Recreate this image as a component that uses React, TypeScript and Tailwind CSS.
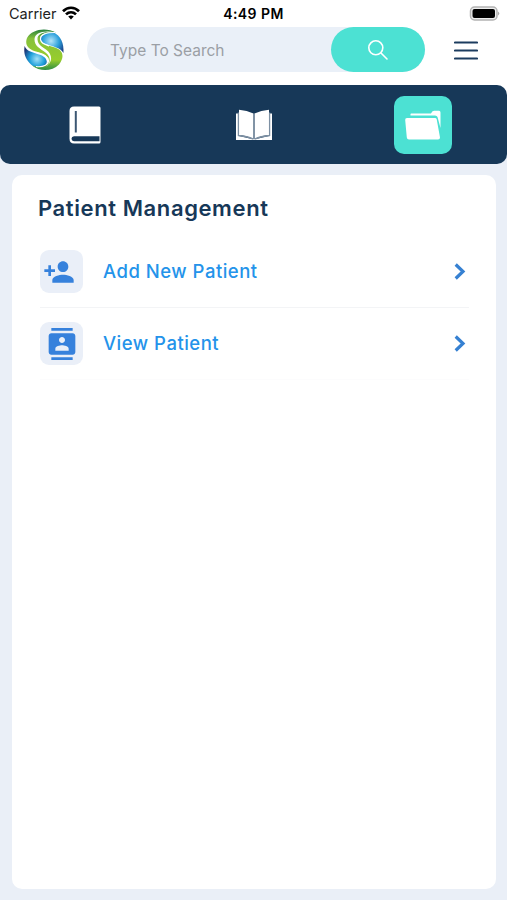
import type { ReactNode } from "react";
import { MdContacts, MdPersonAdd } from "react-icons/md";

type MenuItem = {
  label: string;
  icon: ReactNode;
};

const items: MenuItem[] = [
  {
    label: "Add New Patient",
    icon: <MdPersonAdd className="-ml-1.5 h-8 w-8" />,
  },
  {
    label: "View Patient",
    icon: <MdContacts className="h-8 w-8" />,
  },
];

function Logo() {
  return (
    <svg viewBox="0 0 40 42" className="h-[42px] w-10 shrink-0">
      <defs>
        <radialGradient id="ballTop" gradientUnits="userSpaceOnUse" cx="27" cy="12" r="15">
          <stop offset="0" stopColor="#b5e6fa" />
          <stop offset="0.55" stopColor="#2ba0dc" />
          <stop offset="1" stopColor="#1b3f86" />
        </radialGradient>
        <radialGradient id="ballBottom" gradientUnits="userSpaceOnUse" cx="13" cy="30" r="15">
          <stop offset="0" stopColor="#a5e2f8" />
          <stop offset="0.5" stopColor="#1e9fdb" />
          <stop offset="1" stopColor="#1d2f70" />
        </radialGradient>
        <linearGradient id="ribbon" x1="0" y1="0" x2="0" y2="1">
          <stop offset="0" stopColor="#27803f" />
          <stop offset="0.22" stopColor="#86c13c" />
          <stop offset="0.75" stopColor="#98cd2c" />
          <stop offset="1" stopColor="#2d8c44" />
        </linearGradient>
      </defs>
      <path d="M29 3C37 7 40 14 39.500 24C36 18 29 18 22 15C14 12 14 4 29 3Z" fill="url(#ballTop)" />
      <path d="M.6 17C3 23 9 23 15 25.500C24 28 26 36 17 38.500C13 39 9 37.500 7 35.500C1 30 -.5 24 .6 17Z" fill="url(#ballBottom)" />
      <path d="M32 3.500C22 -2 8 0 3 9C0 17 6 21 12 22.500C20 24.500 25 27 24 33C22 38 15 39 8 36.500C16 43 28 42.500 35 35.500C41 28 39 21 31 18.500C24 16.500 17 15 16 10C16 5 22 2.500 32 3.500Z" fill="url(#ribbon)" />
      <path d="M31 3.300C20 2 13 4.500 13.500 10.500C14 16 18 17.500 22 20.500C29 25.500 29 34 21 38.200C27 35 27.500 28 21.500 23.500C16 19.500 10.500 17 10.500 10.500C10.500 4 19 1 31 3.300Z" fill="white" />
      <path d="M31 3.500C23 3.500 16 5 16.500 10.500C17 14 20 15 25 17M12 23.500C20 25 24 27.500 24.500 31.500C24.500 36 19 38.500 12 37.500" fill="none" stroke="white" strokeWidth="1.200" />
    </svg>
  );
}

function StatusBar() {
  return (
    <div className="flex h-[27px] items-center justify-between pr-[7px] pl-[9px]">
      <div className="flex w-[100px] items-center gap-[5px] text-[14.5px] text-[#222]">
        <span>Carrier</span>
        <svg viewBox="0 0 18 14" className="mb-0.5 h-[14px] w-[18px]" fill="none" stroke="black" strokeWidth="2.7">
          <path d="M1 5.2C5.6 .6 12.4 .6 17 5.2" />
          <path d="M4 8.4C6.9 5.6 11.1 5.6 14 8.4" />
          <path d="M9 13.5L6.2 10.6Q9 8.5 11.8 10.6Z" fill="black" stroke="none" />
        </svg>
      </div>
      <span className="-ml-0.5 text-[14px] font-semibold tracking-[0.45px] text-black">4:49 PM</span>
      <div className="flex w-[100px] justify-end">
        <svg viewBox="0 0 31 15" className="h-[15px] w-[31px]">
          <rect x="1.5" y="1" width="26.500" height="13" rx="4" fill="#eee" stroke="#b3b3b3" strokeWidth="1.5" />
          <rect x="3.500" y="3" width="22.500" height="9" rx="2" fill="black" />
          <path d="M29 5.500Q31.500 7.500 29 9.500Z" fill="#aaa" />
        </svg>
      </div>
    </div>
  );
}

function Header() {
  return (
    <div className="flex h-[45px] items-center pl-6">
      <Logo />
      <div className="ml-[23px] flex h-[45px] w-[338px] items-center justify-between rounded-full bg-[#eaf0f8] pl-[23px]">
        <span className="pt-0.5 text-[15.5px] text-[#9b9fa5]">Type To Search</span>
        <div className="flex h-[45px] w-[94px] items-center justify-center rounded-full bg-[#4ce1d3]">
          <svg viewBox="0 0 22 22" className="h-[22px] w-[22px]" fill="none" stroke="white" strokeWidth="1.6" strokeLinecap="round">
            <circle cx="8.8" cy="8.8" r="7" />
            <path d="M14 14L20 20" />
          </svg>
        </div>
      </div>
      <svg viewBox="0 0 24 20" className="mt-0.5 ml-[29px] h-5 w-6" stroke="#1c3c5f" strokeWidth="2.1" strokeLinecap="round">
        <path d="M1 1.500H23M1 9.500H23M1 17.500H23" />
      </svg>
    </div>
  );
}

function NavBar() {
  return (
    <div className="grid h-[79px] grid-cols-3 place-items-center rounded-[10px] bg-[#173858]">
      <svg viewBox="0 0 32 38" className="h-[38px] w-8">
        <path d="M5 .5H30Q31.500 .5 31.500 2V36Q31.500 37.500 30 37.500H5Q.5 37.500 .5 32.500V5Q.5 .5 5 .5Z" fill="white" />
        <path d="M6.800 5V26.500" stroke="#3c5773" strokeWidth="2" />
        <path d="M5 30.200H30.500V35.300H5Q2.500 35 2.500 32.700Q2.500 30.500 5 30.200Z" fill="#173858" />
      </svg>
      <svg viewBox="0 0 38 32" className="h-8 w-[38px]">
        <path d="M1 4.500H4V27L17 30H21L34 27V4.500H37V31H1Z" fill="white" />
        <path d="M4 .8Q12 1.500 18.500 4.500V30Q12 26.500 4 26Z" fill="white" />
        <path d="M34 .8Q26 1.500 19.500 4.500V30Q26 26.500 34 26Z" fill="white" />
        <path d="M3.400 3.500V26.500Q12 27 18.500 30.200M34.600 3.500V26.500Q26 27 19.500 30.200M19 5V30" stroke="#7d90a3" strokeWidth="1.300" fill="none" />
      </svg>
      <div className="flex h-[58px] w-[58px] items-center justify-center rounded-[10px] bg-[#4ce1d3]">
        <svg viewBox="0 0 38 30" className="h-[30px] w-[38px]" fill="white">
          <path d="M7 3.500H27Q28 1 30 .7H35Q36.500 .7 36.500 2.500V18L33.500 7Q33 5.500 31 5.500H6.500V4Z" />
          <path d="M3 8H31Q32.300 8 32.700 9.300L36 27.500Q36 29.500 34 29.500H5Q3 29.500 2.800 27.500L1.200 10Q1 8 3 8Z" />
        </svg>
      </div>
    </div>
  );
}

function MenuRow({ item }: { item: MenuItem }) {
  return (
    <div className="flex h-[72px] items-center border-b border-[#f3f4f6] pr-[3px] last:border-[#fcfcfd]">
      <div className="flex h-[43px] w-[43px] items-center justify-center rounded-[9px] bg-[#eaeff8] text-[#3681dc]">
        {item.icon}
      </div>
      <span className="ml-5 grow text-[18.5px] font-medium tracking-[0.5px] text-[#2493ea]">
        {item.label}
      </span>
      <svg viewBox="0 0 12 17" className="h-[17px] w-3" fill="none" stroke="#3681d2" strokeWidth="3.2">
        <path d="M1.700 1.500L9 8.500L1.700 15.500" />
      </svg>
    </div>
  );
}

function App() {
  return (
    <div className="flex h-[900px] w-[507px] flex-col bg-[#eaeff7] font-['Inter',sans-serif]">
      <div className="bg-white">
        <StatusBar />
        <Header />
        <div className="h-[13px]" />
      </div>
      <div className="bg-linear-to-b from-white from-50% to-transparent to-50%">
        <NavBar />
      </div>

      {/* Patient menu */}
      <div className="mt-[11px] mr-[11px] mb-[11px] ml-3 grow rounded-[10px] bg-white pr-[27px] pl-[28px]">
        <h1 className="-ml-0.5 flex h-[61px] items-center pt-1.5 text-[22px] font-semibold tracking-[0.6px] text-[#173858]">
          Patient Management
        </h1>
        {items.map((item) => (
          <MenuRow key={item.label} item={item} />
        ))}
      </div>
    </div>
  );
}

export default App;
